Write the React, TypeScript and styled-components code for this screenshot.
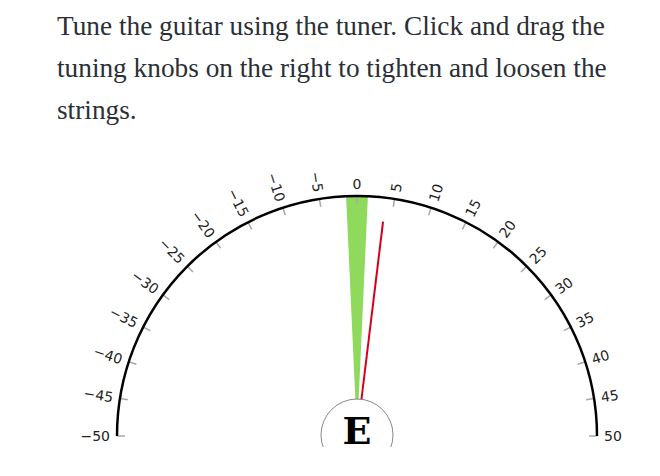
import React from 'react';
import styled, { createGlobalStyle } from 'styled-components';

const GlobalStyle = createGlobalStyle`
    html, body {
        margin: 0;
        padding: 0;
        background: #fff;
    }
`;

const Page = styled.div`
    width: 600px;
    margin-left: 57px;
    padding-top: 5px;
`;

const Intro = styled.p`
    margin: 0 0 16px 0;
    font-family: "Liberation Serif", "DejaVu Serif", serif;
    font-size: 27.3px;
    line-height: 42px;
    color: #2b2f36;
`;

const TunerSvg = styled.svg`
    display: block;
    width: 600px;
    height: 300px;
    overflow: hidden;
`;

const Dial = styled.path`
    fill: none;
    stroke: #000;
    stroke-width: 2.5;
`;

const InTune = styled.path`
    fill: #8fd95c;
`;

const Tick = styled.line`
    stroke: #a8a8a8;
    stroke-width: 1.5;
`;

const TickLabel = styled.text`
    font-family: "DejaVu Sans", sans-serif;
    font-size: 14px;
    fill: #222;
    dominant-baseline: central;
`;

const Needle = styled.line`
    stroke: #d4001e;
    stroke-width: 2;
`;

const NoteBadge = styled.circle`
    fill: #fff;
    stroke: #888;
    stroke-width: 1;
`;

const NoteName = styled.text`
    font-family: "DejaVu Serif", "Liberation Serif", serif;
    font-weight: bold;
    font-size: 38px;
    fill: #000;
    text-anchor: middle;
`;

const CX = 300;
const CY = 289;
const R = 240;
const DEG_PER_CENT = 1.8;

const polar = (deg: number, r: number) => {
    const a = (deg * Math.PI) / 180;
    return { x: CX + r * Math.sin(a), y: CY - r * Math.cos(a) };
};

const ticks: number[] = [];
for (let c = -50; c <= 50; c += 5) ticks.push(c);

const wedge = (half: number) => {
    const a = polar(-half, R);
    const b = polar(half, R);
    return `M ${CX} ${CY} L ${a.x} ${a.y} A ${R} ${R} 0 0 1 ${b.x} ${b.y} Z`;
};

const Tuner: React.FC<{ cents: number; note: string }> = ({ cents, note }) => {
    const left = polar(-90, R);
    const right = polar(90, R);
    const tip = polar(cents * DEG_PER_CENT, 216);

    return (
        <TunerSvg viewBox="0 0 600 300">
            <InTune d={wedge(2.6)} />
            {ticks.map((c) => {
                const deg = c * DEG_PER_CENT;
                const p1 = polar(deg, R);
                const p2 = polar(deg, R - 8);
                return <Tick key={`t${c}`} x1={p1.x} y1={p1.y} x2={p2.x} y2={p2.y} />;
            })}
            <Dial d={`M ${left.x} ${left.y} A ${R} ${R} 0 0 1 ${right.x} ${right.y}`} />
            {ticks.map((c) => {
                const deg = c * DEG_PER_CENT;
                const text = c < 0 ? `\u2212${-c}` : `${c}`;
                if (c === 0) {
                    const p = polar(0, R + 12);
                    return (
                        <TickLabel key={`l${c}`} x={p.x} y={p.y} textAnchor="middle">
                            {text}
                        </TickLabel>
                    );
                }
                // left half reads inward, right half reads outward
                const p = polar(deg, R + 7);
                const rot = c < 0 ? deg + 90 : deg - 90;
                return (
                    <TickLabel
                        key={`l${c}`}
                        x={p.x}
                        y={p.y}
                        textAnchor={c < 0 ? 'end' : 'start'}
                        transform={`rotate(${rot} ${p.x} ${p.y})`}
                    >
                        {text}
                    </TickLabel>
                );
            })}
            <Needle x1={CX} y1={CY} x2={tip.x} y2={tip.y} />
            <NoteBadge cx={CX} cy={CY - 1} r={36} />
            <NoteName x={CX} y={CY + 8}>{note}</NoteName>
        </TunerSvg>
    );
};

const App: React.FC = () => {
    return (
        <>
            <GlobalStyle />
            <Page>
                <Intro>
                    Tune the guitar using the tuner. Click and drag the tuning knobs on the right to tighten and loosen the strings.
                </Intro>
                <Tuner cents={3.85} note="E" />
            </Page>
        </>
    );
};

export default App;
